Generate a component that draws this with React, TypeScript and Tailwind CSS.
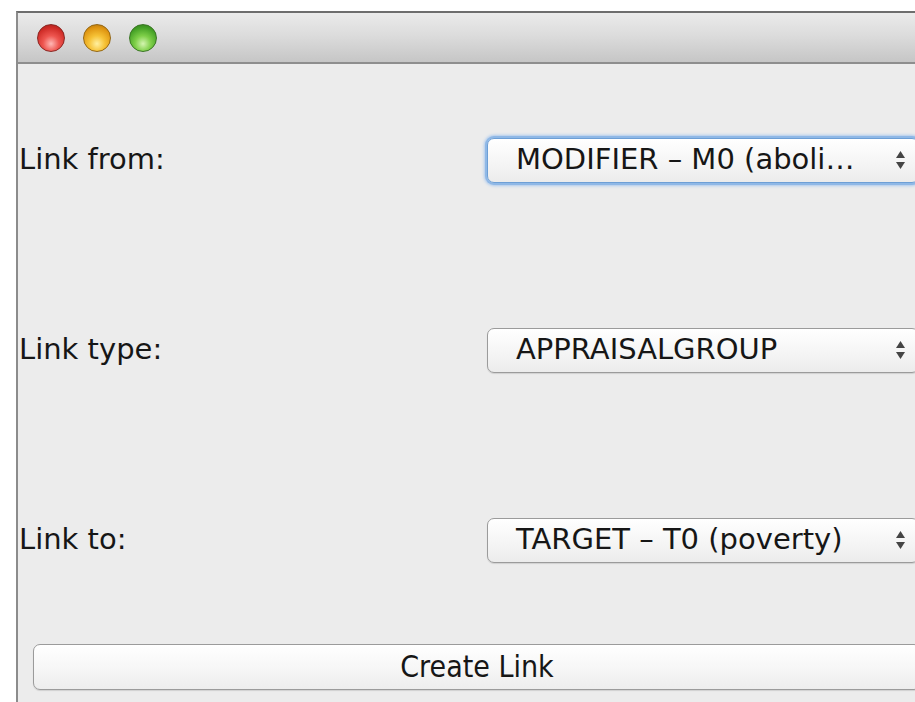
import React from "react";

const uiFont = { fontFamily: '"DejaVu Sans", "Liberation Sans", sans-serif' };

function Arrows() {
  return (
    <svg width="11" height="20" viewBox="0 0 11 20" className="shrink-0">
      <path d="M5.5 1 L10 8 L1 8 Z" fill="#454545" />
      <path d="M5.5 19 L10 12 L1 12 Z" fill="#454545" />
    </svg>
  );
}

function Select({ value, focused }: { value: string; focused?: boolean }) {
  return (
    <div
      className={
        "flex h-[45px] w-[432px] items-center justify-between rounded-[7px] border bg-[linear-gradient(#ffffff,#f6f6f6_50%,#ececec)] pl-[28px] pr-[12px] text-[29px] text-[#161616] " +
        (focused
          ? "border-[#6d9fd6] shadow-[0_0_0_2px_#8fb8e6,0_0_3px_3px_#a9c8ee]"
          : "border-[#9b9b9b] shadow-[0_1px_1px_rgba(0,0,0,0.12)]")
      }
      style={uiFont}
    >
      <span className="whitespace-nowrap">{value}</span>
      <Arrows />
    </div>
  );
}

function Row({ label, value, focused }: { label: string; value: string; focused?: boolean }) {
  return (
    <div className="flex h-[190px] items-center pt-[2px]">
      <div className="w-[469px] pl-[1px] text-[29px] text-[#161616]" style={uiFont}>
        {label}
      </div>
      <Select value={value} focused={focused} />
    </div>
  );
}

function Light({ kind }: { kind: "red" | "yellow" | "green" }) {
  const cls = {
    red: "bg-[radial-gradient(circle_at_50%_72%,#ffb8b5_0%,#ee5650_35%,#cf2c27_70%,#9a1a17_100%)] border-[#8a2723]",
    yellow: "bg-[radial-gradient(circle_at_50%_72%,#fff0a0_0%,#f6c236_35%,#df9511_70%,#a3680b_100%)] border-[#956713]",
    green: "bg-[radial-gradient(circle_at_50%_72%,#d4f5b0_0%,#7ecf48_35%,#45a126_70%,#2a6f16_100%)] border-[#3a7624]",
  }[kind];
  return <div className={"h-[28px] w-[28px] rounded-full border " + cls} />;
}

export default function App() {
  return (
    <div className="h-[702px] w-[915px] overflow-hidden bg-white pl-[16px] pt-[11px]">
      <div className="h-[720px] w-[960px] border-l-2 border-t-2 border-[#6e6e6e] border-l-[#8c8c8c] bg-[#ececec]">
        <div className="flex h-[51px] items-center gap-[18px] border-b-2 border-[#8e8e8e] bg-[linear-gradient(#ebebeb,#dcdcdc_45%,#c6c6c6)] pl-[19px]">
          <Light kind="red" />
          <Light kind="yellow" />
          <Light kind="green" />
        </div>
        <div className="flex flex-col">
          <Row label="Link from:" value="MODIFIER – M0 (aboli…" focused />
          <Row label="Link type:" value="APPRAISALGROUP" />
          <Row label="Link to:" value="TARGET – T0 (poverty)" />
          <div className="pl-[15px] pt-[10px]">
            <button
              className="h-[46px] w-[888px] rounded-[7px] border border-[#9b9b9b] bg-[linear-gradient(#ffffff,#f7f7f7_50%,#ededed)] text-[30px] leading-none text-[#161616] shadow-[0_1px_1px_rgba(0,0,0,0.12)]"
              style={{ fontFamily: '"DejaVu Sans Condensed", "Liberation Sans Narrow", "Liberation Sans", sans-serif' }}
            >
              Create Link
            </button>
          </div>
        </div>
      </div>
    </div>
  );
}
